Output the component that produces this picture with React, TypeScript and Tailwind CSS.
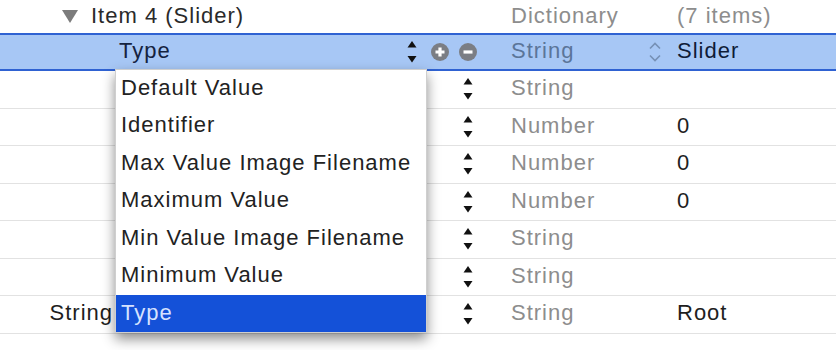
import React from "react";

const Stepper = ({ className = "" }: { className?: string }) => (
  <svg width="10" height="24" viewBox="0 0 10 24" className={className}>
    <path d="M5 1 L9.5 7.5 L0.5 7.5 Z" fill="#111" />
    <path d="M0.5 16 L9.5 16 L5 22.5 Z" fill="#111" />
  </svg>
);

const rows: { type: string; value: string; key?: string }[] = [
  { type: "String", value: "" },
  { type: "Number", value: "0" },
  { type: "Number", value: "0" },
  { type: "Number", value: "0" },
  { type: "String", value: "" },
  { type: "String", value: "" },
  { type: "String", value: "Root", key: "String" },
];

const menuItems = [
  "Default Value",
  "Identifier",
  "Max Value Image Filename",
  "Maximum Value",
  "Min Value Image Filename",
  "Minimum Value",
  "Type",
];

export default function App() {
  return (
    <div
      className="relative w-[836px] h-[350px] overflow-hidden bg-white text-[22px] tracking-[1px]"
      style={{ fontFamily: '"Liberation Sans", Arial, sans-serif' }}
    >
      {/* Item 4 row */}
      <div className="flex h-[33px] items-center pb-[3px]">
        <div className="flex w-[511px] items-center">
          <svg width="16" height="14" viewBox="0 0 16 14" className="ml-[62px] mr-[13px] mt-[2px]">
            <path d="M0 1 L16 1 L8 14 Z" fill="#7c7c7c" />
          </svg>
          <span className="text-[#2a2a2a]">Item 4 (Slider)</span>
        </div>
        <div className="w-[166px] text-[#8d8d8d]">Dictionary</div>
        <div className="text-[#8d8d8d]">(7 items)</div>
      </div>

      {/* Selected row */}
      <div className="flex h-[38px] items-center border-y-2 border-[#2f62d2] bg-[#a7c7f5]">
        <div className="flex w-[511px] items-center">
          <span className="ml-[119px] w-[288px] pb-[3px] text-[#15233f]">Type</span>
          <Stepper />
          <div className="ml-[14px] flex h-[18px] w-[18px] items-center justify-center rounded-full bg-[#7b7e84]">
            <svg width="12" height="12" viewBox="0 0 12 12">
              <path d="M6 1.5 V10.5 M1.5 6 H10.5" stroke="white" strokeWidth="3.2" />
            </svg>
          </div>
          <div className="ml-[10px] flex h-[18px] w-[18px] items-center justify-center rounded-full bg-[#7b7e84]">
            <svg width="12" height="12" viewBox="0 0 12 12">
              <path d="M1.5 6 H10.5" stroke="white" strokeWidth="3.2" />
            </svg>
          </div>
        </div>
        <div className="w-[135px] pb-[3px] text-[#5b7599]">String</div>
        <svg width="18" height="26" viewBox="0 0 18 26" className="mr-[13px]">
          <path d="M4 9.5 L9 4.5 L14 9.5" fill="none" stroke="#7690b5" strokeWidth="1.6" />
          <path d="M4 16.5 L9 21.5 L14 16.5" fill="none" stroke="#7690b5" strokeWidth="1.6" />
        </svg>
        <div className="pb-[3px] text-[#0f1c38]">Slider</div>
      </div>

      {/* Remaining rows */}
      {rows.map((r, i) => (
        <div key={i} className="flex h-[37.5px] items-center border-b border-[#e2e2e2]">
          <div className="flex w-[458px] items-center justify-end pb-[3px]">
            {r.key && <span className="mr-[345px] text-[#1e1e1e]">{r.key}</span>}
          </div>
          <div className="flex w-[20px] justify-center">
            <Stepper />
          </div>
          <div className="w-[33px]" />
          <div className="w-[166px] pb-[3px] text-[#8d8d8d]">{r.type}</div>
          <div className="pb-[3px] text-[#1e1e1e]">{r.value}</div>
        </div>
      ))}

      {/* Popup menu */}
      <div className="absolute left-[115px] top-[69px] w-[312px] border border-[#cfcfcf] bg-white shadow-[0_6px_12px_rgba(0,0,0,0.45)]">
        {menuItems.map((m, i) => (
          <div
            key={i}
            className={
              i === menuItems.length - 1
                ? "flex h-[37px] items-center bg-[#1451d8] pb-[3px] pl-[5px] text-[#d6e2ff]"
                : "flex h-[37.5px] items-center pb-[3px] pl-[5px] text-[#222]"
            }
          >
            {m}
          </div>
        ))}
      </div>
    </div>
  );
}
